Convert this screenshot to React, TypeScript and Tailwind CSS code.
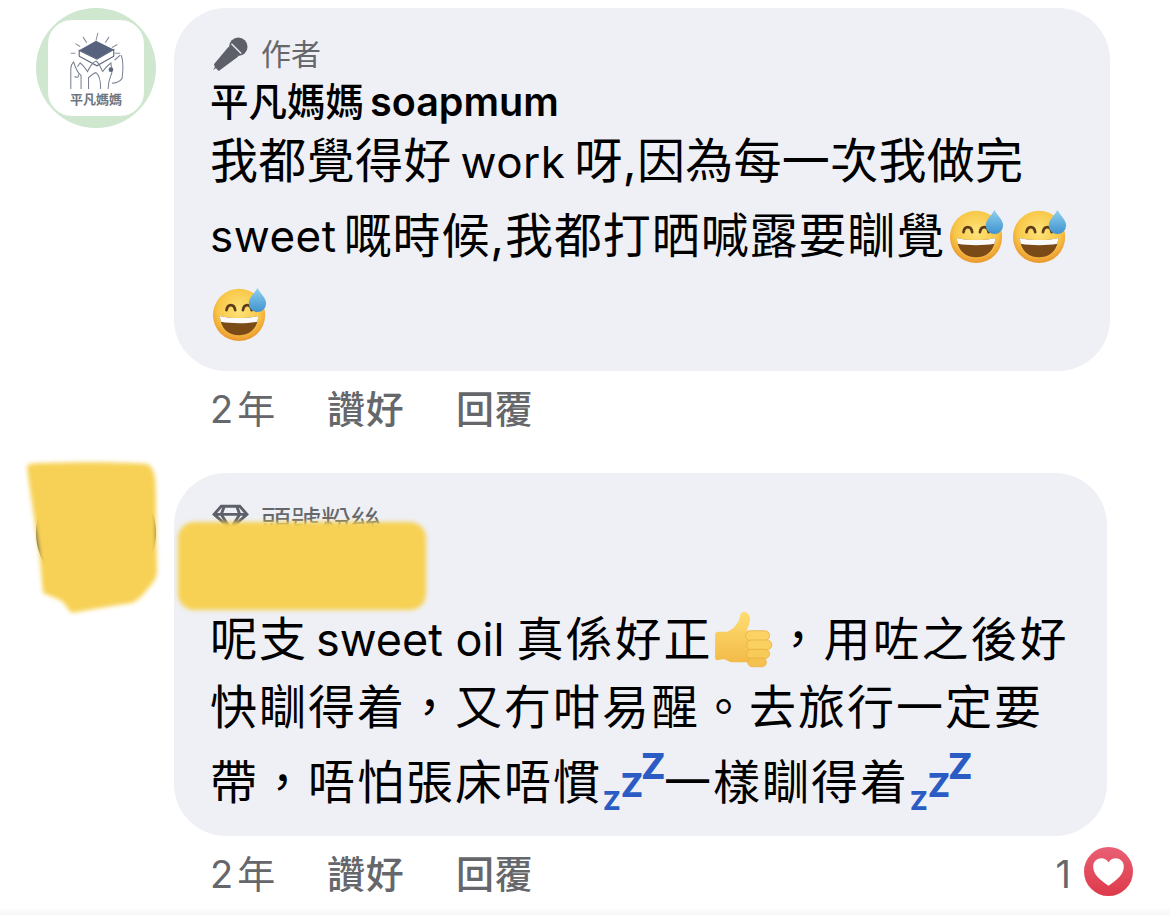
const FONT = "[font-family:Inter,'Noto_Sans_CJK_TC',sans-serif]";

function SweatGrin({ className = "" }: { className?: string }) {
  return (
    <svg viewBox="0 0 60 60" className={`inline-block w-[58px] h-[58px] shrink-0 ${className}`}>
      <defs>
        <radialGradient id="face" cx="50%" cy="40%" r="58%">
          <stop offset="0%" stopColor="#fde479" />
          <stop offset="70%" stopColor="#f8c748" />
          <stop offset="100%" stopColor="#ec9a2f" />
        </radialGradient>
        <linearGradient id="drop" x1="0" y1="0" x2="0" y2="1">
          <stop offset="0%" stopColor="#8fd0ee" />
          <stop offset="100%" stopColor="#3f93cf" />
        </linearGradient>
      </defs>
      <circle cx="28" cy="31" r="27" fill="url(#face)" />
      <path d="M15 26c1-7 8-7 9 0M32 26c1-7 8-7 9 0" fill="none" stroke="#5c3a1a" strokeWidth="2.800" strokeLinecap="round" />
      <path d="M8 32c13 3 27 3 40 0-1 13-9 20-20 20S9 45 8 32z" fill="#7a4a17" />
      <path d="M8 32c13 3 27 3 40 0l-1 6c-12 2-26 2-38 0z" fill="#fbfbfb" />
      <path d="M47 3c3 6 9 10 9 16a9 9 0 0 1-18 0c0-6 6-10 9-16z" fill="url(#drop)" />
    </svg>
  );
}

function ThumbsUp() {
  return (
    <svg viewBox="1 1 55 55" className="inline-block ml-[2px] w-[60px] h-[60px] shrink-0">
      <defs>
        <linearGradient id="thumb" x1="0" y1="0" x2="0" y2="1">
          <stop offset="0%" stopColor="#fedd72" />
          <stop offset="100%" stopColor="#f3bb48" />
        </linearGradient>
      </defs>
      <path d="M2 24c0-2 1-3 3-3h8c5-2 9-6 11-11 1-3 1-6 3-7 3-1 7 1 7 6 0 4-2 8-3 11h11v29H18c-3 0-5-2-8-3l-6 1c-1 0-2-1-2-2z" fill="url(#thumb)" />
      <rect x="30" y="20" width="22" height="9" rx="4.500" fill="#fbd263" stroke="#e8ad42" strokeWidth=".7" />
      <rect x="31" y="28.500" width="23" height="9" rx="4.500" fill="#fad060" stroke="#e8ad42" strokeWidth=".7" />
      <rect x="31" y="37" width="21" height="8.500" rx="4.200" fill="#f8ca58" stroke="#e8ad42" strokeWidth=".7" />
      <rect x="32" y="45" width="17" height="8" rx="4" fill="#f5c250" stroke="#e8ad42" strokeWidth=".7" />
    </svg>
  );
}

function Zzz() {
  return (
    <span className="flex items-start w-[62px] h-[60px] shrink-0 pl-[1px] font-extrabold tracking-normal text-[#2a5cc4] leading-none">
      <span className="mt-[36px] text-[26px]">Z</span>
      <span className="mt-[17px] text-[33px]">Z</span>
      <span className="ml-[-2px] mt-[-4px] text-[36px]">Z</span>
    </span>
  );
}

function Logo() {
  return (
    <div className="w-[120px] h-[120px] shrink-0 rounded-full bg-[#cfe6cf] flex items-center justify-center">
      <div className="w-[96px] h-[96px] rounded-[24px] bg-white flex flex-col items-center">
        <svg viewBox="0 0 60 60" preserveAspectRatio="none" className="w-[56px] h-[58px] mt-[12px]" fill="none" stroke="#77808f" strokeWidth="1.100">
          <path d="M30 9l2-8M20 11l-4-6M40 11l4-6M13 15l-5-3M47 16l6-3M8 22H3M50 22h6" stroke="#8a909b" />
          <path d="M30 9l19 9-18 10-19-9z" fill="#57637e" stroke="none" />
          <path d="M12 19v6l19 10 18-10v-7l-18 10z" fill="#fff" stroke="#5c667c" strokeWidth="1.200" />
          <path d="M3 59V38c0-3 2-6 3-7 2 6 5 12 8 14v14M10 36l3-4c3 2 6 6 8 9 2-5 6-10 9-11 3 2 5 6 7 11" />
          <path d="M7 46c3 2 5 0 4-2M22 59V47c3-2 6-5 8-5 3 2 5 8 5 17" />
          <path d="M37 41c2-3 6-7 9-9l1 10c-1 4-4 7-4 17M57 24c2 5 2 16 1 24-2 3-7 5-11 5M50 29l6-5" />
          <circle cx="46" cy="39" r="2.500" fill="#5c667c" stroke="none" />
        </svg>
        <span className="mt-[2px] text-[13px] leading-none font-bold text-[#6d7580] [font-family:'Noto_Sans_CJK_TC',serif]">平凡媽媽</span>
      </div>
    </div>
  );
}

function Footer({ children }: { children?: React.ReactNode }) {
  return (
    <div className="flex items-center h-[76px] pl-[36px] text-[38px] text-[#65676b]">
      <span className="w-[117px] tracking-[4px]">2年</span>
      <span className="w-[129px] font-medium tracking-[.8px]">讚好</span>
      <span className="font-medium tracking-[.8px]">回覆</span>
      {children}
    </div>
  );
}

export default function App() {
  return (
    <div className={`relative w-[1170px] h-[915px] overflow-hidden bg-white text-black ${FONT}`}>
      <div className="flex flex-col pt-[8px]">
        <div className="flex pl-[36px] gap-[18px]">
          <Logo />
          <div className="w-[936px]">
            <div className="h-[363px] rounded-[52px] bg-[#eff0f5] pl-[36px] pt-[26px]">
              <div className="flex items-center h-[40px] gap-[12px] text-[30px] text-[#65676b]">
                <svg viewBox="0 0 38 38" className="ml-[2px] w-[37px] h-[37px]" fill="#5d6068">
                  <circle cx="27" cy="11" r="9.500" />
                  <path d="M17 11l10 10L7 36l-3-3-3 2 2-3-1-3z" />
                  <path d="M20 8l10 10" stroke="#eff0f5" strokeWidth="1.300" />
                </svg>
                <span>作者</span>
              </div>
              <div className="flex items-center h-[54px] pt-[4px] text-[38.500px] font-medium">
                平凡媽媽<span className="ml-[6px] text-[39.500px] font-semibold">soapmum</span>
              </div>
              <div className="text-[48px] tracking-[.3px] whitespace-nowrap">
                <div className="h-[68px] leading-[66px]">
                  我都覺得好<span className="mx-[9px] text-[44px] tracking-[.5px]">work</span>呀,因為每一次我做完
                </div>
                <div className="flex items-center h-[80px] tracking-[.9px]">
                  <span className="mr-[7px] text-[44px] tracking-[.5px]">sweet</span>嘅時候,我都打晒喊露要瞓覺
                  <SweatGrin className="ml-[4px]" />
                  <SweatGrin className="ml-[5px]" />
                </div>
                <div className="flex items-center h-[76px]">
                  <SweatGrin className="ml-[2px]" />
                </div>
              </div>
            </div>
            <Footer />
          </div>
        </div>

        <div className="flex pl-[36px] gap-[18px] mt-[26px]">
          <div className="w-[120px] h-[120px] shrink-0 rounded-full bg-[#5f5c4e]" />
          <div className="w-[933px]">
            <div className="h-[363px] rounded-[52px] bg-[#eff0f5] pl-[36px] pt-[28px]">
              <div className="flex items-center h-[40px] gap-[12px] text-[30px] text-[#65676b]">
                <svg viewBox="0 0 36 26" className="ml-[2px] mt-[-8px] w-[37px] h-[27px]" fill="none" stroke="#5d6068" strokeWidth="2.800">
                  <path d="M9 2h18l7 8-16 14L2 10zM2 10h32M12 2l-3 8 9 14 9-14-3-8" />
                </svg>
                <span>頭號粉絲</span>
              </div>
              <div className="h-[67px]" />
              <div className="text-[47px] whitespace-nowrap">
                <div className="flex items-center h-[63px] tracking-[2px]">
                  呢支<span className="ml-[8px] mr-[12px] text-[45px] tracking-normal">sweet oil</span>真係好正
                  <ThumbsUp />
                  ，用咗之後好
                </div>
                <div className="h-[72px] leading-[72px] tracking-[2px]">快瞓得着，又冇咁易醒。去旅行一定要</div>
                <div className="flex items-center h-[78px] tracking-[2px]">
                  帶，唔怕張床唔慣
                  <Zzz />
                  一樣瞓得着
                  <Zzz />
                </div>
              </div>
            </div>
            <Footer>
              <span className="ml-auto mr-[-26px] flex items-center gap-[13px] text-[#65676b]">
                1
                <svg viewBox="0 0 48 48" className="mt-[-6px] w-[49px] h-[49px]">
                  <defs>
                    <linearGradient id="love" x1="0" y1="0" x2="0" y2="1">
                      <stop offset="0%" stopColor="#e95f74" />
                      <stop offset="100%" stopColor="#dd3a4a" />
                    </linearGradient>
                  </defs>
                  <circle cx="24" cy="24" r="24" fill="url(#love)" />
                  <path d="M24 38C14 31 9 26 9 19c0-5 4-8 8-8 3 0 5 1 7 4 2-3 4-4 7-4 4 0 8 3 8 8 0 7-5 12-15 19z" fill="#fff" />
                </svg>
              </span>
            </Footer>
          </div>
        </div>
      </div>

      {/* yellow scribbles hiding the second commenter */}
      <svg viewBox="0 0 150 170" className="absolute left-[16px] top-[453px] w-[150px] h-[170px]">
        <defs>
          <filter id="soft"><feGaussianBlur stdDeviation="2" /></filter>
        </defs>
        <path d="M11 13c3-3 10-3 20-3 30-1 70-1 100 1 5 2 7 8 8 14 1 12 1 25 1 40l1 55c-1 7-6 12-10 17-5 6-10 11-15 13-20 3-40 6-60 10-4-3-6-8-10-12-6-3-12-5-19-8-1-10-2-20-3-33-2-18-5-35-7-50-2-15-5-32-6-44z" fill="#f7d154" filter="url(#soft)" />
      </svg>
      <div className="absolute left-[178px] top-[522px] w-[248px] h-[88px] rounded-[16px] bg-[#f7d154] blur-[2px]" />

      <div className="absolute left-0 right-0 bottom-0 h-[8px] bg-gradient-to-b from-white to-[#f6f6f7]" />
    </div>
  );
}
